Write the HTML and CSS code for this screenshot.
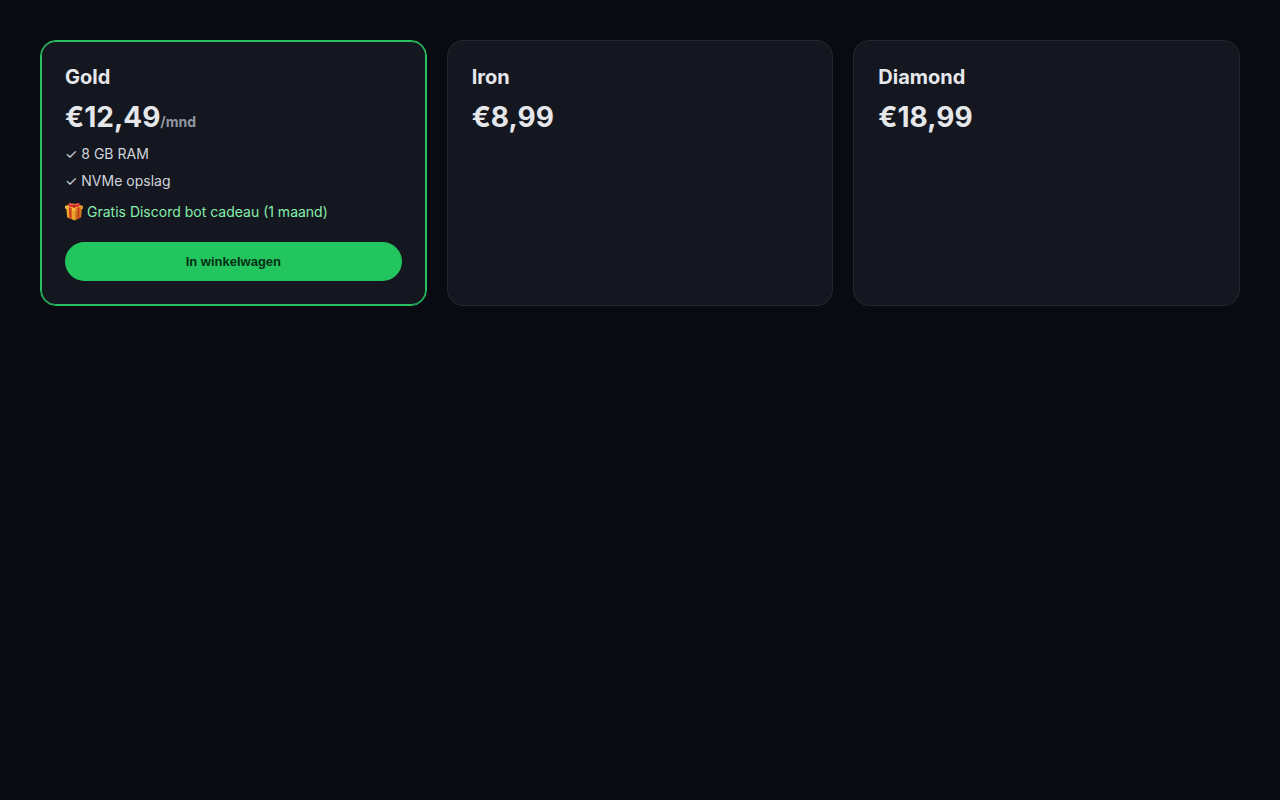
FILE: index.html
```html
<!DOCTYPE html>
<html lang="nl">
<head>
<meta charset="utf-8">
<meta name="viewport" content="width=device-width, initial-scale=1">
<title>Hosting</title>
<link rel="stylesheet" href="styles.css">
</head>
<body>
<main class="plans">
  <article class="plan plan-featured">
    <h2 class="plan-name">Gold</h2>
    <p class="price">€12,49<span class="period">/mnd</span></p>
    <ul class="features">
      <li>✓ 8 GB RAM</li>
      <li>✓ NVMe opslag</li>
    </ul>
    <p class="gift">
      <svg class="gift-icon" viewBox="0 0 18 20" aria-hidden="true">
        <path fill="#eea52a" d="M1.2 6 10 8V18.4L2.2 15.6Z"/>
        <path fill="#c97a1c" d="M10 8 17 6 16.2 15.2 10 18.4Z"/>
        <path fill="#f6b93c" d="M0 4 8 1.6 18 4V6.6L10 9 0 6.6Z"/>
        <path fill="#dc8e28" d="M10 6.2 18 4V6.6L10 9Z"/>
        <path fill="#cf3a20" d="M3.8 5.2 6.6 6V17.2L4.4 16.4ZM12.4 6 14.6 5.2 14.2 16.3 12.4 17.2Z"/>
        <path fill="#d93430" d="M9 4.8C6 5.8 3 4.8 3.2 2.4 3.5 0 7.5.6 9 3.2 10.5.6 14.5 0 14.8 2.4 15 4.8 12 5.8 9 4.8Z"/>
        <path fill="#f1675b" d="M4 2C5 .9 7 1.8 8 3.4 6.5 2.7 5 2.7 4 2ZM14 2C13 .9 11 1.8 10 3.4 11.5 2.7 13 2.7 14 2Z"/>
        <path fill="#b8221e" d="M7.8 3H10.2L10 5.7H8Z"/>
      </svg>
      <span>Gratis Discord bot cadeau (1 maand)</span>
    </p>
    <button class="buy" type="button">In winkelwagen</button>
  </article>
  <article class="plan">
    <h2 class="plan-name">Iron</h2>
    <p class="price">€8,99</p>
  </article>
  <article class="plan">
    <h2 class="plan-name">Diamond</h2>
    <p class="price">€18,99</p>
  </article>
</main>
</body>
</html>
```
FILE: styles.css
```css
* {
  box-sizing: border-box;
}

body {
  margin: 0;
  padding: 40px;
  background: #0a0b12;
  color: #e5e7eb;
  font-family: Inter, "Liberation Sans", sans-serif;
}

.plans {
  display: grid;
  grid-template-columns: repeat(3, 1fr);
  gap: 20px;
}

.plan {
  padding: 24px;
  border: 1px solid #24272f;
  border-radius: 16px;
  background: #14171f;
}

.plan-featured {
  border-color: #22c55e;
  box-shadow: inset 0 0 0 1px #2fb963;
}

.plan-name {
  margin: 0 0 10px;
  font-size: 20px;
  line-height: 24px;
  font-weight: 700;
}

.price {
  margin: 0;
  font-size: 28px;
  line-height: 36px;
  font-weight: 700;
}

.period {
  color: #9096a2;
  font-size: 14px;
}

.features {
  margin: 0;
  padding: 0;
  list-style: none;
  color: #d0d4dc;
  font-size: 14px;
  line-height: 27px;
}

.gift {
  display: flex;
  align-items: center;
  gap: 4px;
  margin: 8px 0 20px;
  color: #86efac;
  font-size: 14px;
  line-height: 20px;
}

.gift-icon {
  width: 18px;
  height: 20px;
}

.buy {
  display: block;
  width: 100%;
  padding: 12px;
  border: 0;
  border-radius: 20px;
  background: #22c55e;
  color: #052e16;
  font-family: "Liberation Sans", Arial, sans-serif;
  font-size: 13px;
  line-height: 15px;
  font-weight: 700;
}
```
